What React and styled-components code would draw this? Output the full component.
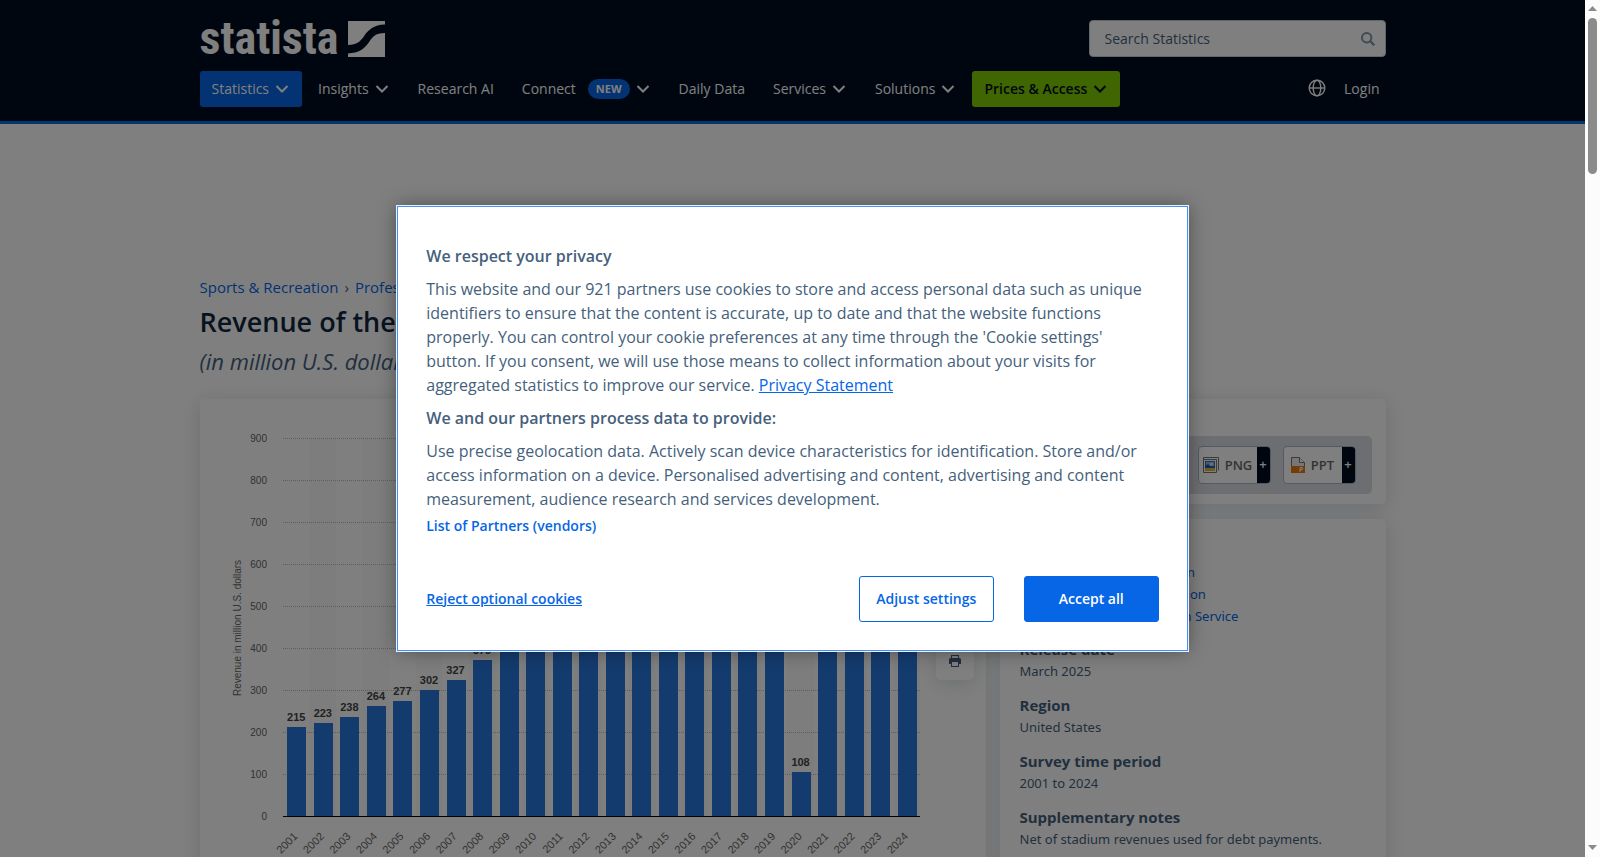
import React from 'react'
import styled, { createGlobalStyle } from 'styled-components'

const GlobalStyle = createGlobalStyle`
* { box-sizing: border-box; }
body {
  margin: 0;
  background: #fff;
  color: #455f7c;
  font-family: 'Open Sans', 'Noto Sans', sans-serif;
  font-size: 14px;
}
button, input { font-family: inherit; font-size: inherit; }
h1, h2, h3, p, dl, dt, dd, ul { margin: 0; padding: 0; }
a { color: #0666e5; text-decoration: none; }
svg { flex: none; }
`

const Window = styled.div`
display: flex;
height: 100vh;
overflow: hidden;
`

const Viewport = styled.div`
position: relative;
flex: 1;
min-width: 0;
overflow: hidden;
`

const ScrollTrack = styled.div`
display: flex;
flex-direction: column;
align-items: center;
width: 15px;
padding: 6px 0 7px;
background: #fcfcfc;
`

const ScrollThumb = styled.div`
width: 9px;
height: 156px;
margin: 7px 0 auto;
border-radius: 5px;
background: #8b8b8b;
`

const Container = styled.div`
max-width: 1186px;
margin: 0 auto;
`

const Header = styled.header`
padding: 20px 0 14px;
background: #000d20;
border-bottom: 3px solid #0666e5;
`

const HeaderTop = styled(Container)`
display: flex;
justify-content: space-between;
height: 37px;
`

const Logo = styled.a`
display: flex;
align-items: center;
gap: 9px;
color: #fff;
`

const LogoText = styled.span`
font-family: 'Liberation Sans Narrow', 'Roboto Condensed', 'Liberation Sans', sans-serif;
font-size: 46px;
font-weight: 700;
line-height: 37px;
`

const SearchForm = styled.form`
display: flex;
align-items: center;
width: 297px;
padding: 0 10px 0 15px;
background: #fff;
border: 1px solid #c3ccd6;
border-radius: 4px;
`

const SearchInput = styled.input`
flex: 1;
min-width: 0;
padding: 0;
border: 0;
outline: 0;
background: none;
&::placeholder { color: #455f7c; opacity: 1; }
`

const IconButton = styled.button`
display: flex;
padding: 0;
border: 0;
background: none;
color: ${props => props.$color || '#fff'};
`

const Nav = styled(Container)`
display: flex;
align-items: center;
gap: 4px;
padding-top: 14px;
`

const NavItem = styled.a`
display: flex;
align-items: center;
gap: 5px;
height: 36px;
padding: 0 12px 2px;
border-radius: 3px;
white-space: nowrap;
color: ${props => props.$color || '#fff'};
background: ${props => props.$bg || 'none'};
font-weight: ${props => props.$bold ? 600 : 400};
`

const Badge = styled.span`
margin: 2px 0 0 7px;
padding: 0 8px;
border-radius: 10px;
background: #0666e5;
font-size: 11px;
font-weight: 700;
line-height: 20px;
`

const NavRight = styled.div`
display: flex;
align-items: center;
gap: 18px;
margin-left: auto;
padding: 0 6px 2px 0;
a { color: #fff; }
`

const Main = styled(Container)`
padding-top: 151px;
`

const Breadcrumb = styled.nav`
display: flex;
gap: 6px;
font-size: 15px;
line-height: 24px;
`

const Title = styled.h1`
margin-top: 4px;
color: #0f2741;
font-size: 27px;
font-weight: 600;
line-height: 38px;
`

const Subtitle = styled.h2`
margin-top: 2px;
font-size: 22px;
font-style: italic;
font-weight: 400;
line-height: 36px;
`

const Columns = styled.div`
display: grid;
grid-template-columns: minmax(0, 1fr) 386px;
gap: 14px;
align-items: start;
margin-top: 20px;
`

const Card = styled.section`
background: #fff;
border-radius: 5px;
box-shadow: 0 3px 20px rgba(15, 39, 65, 0.16);
`

const ChartCard = styled(Card)`
display: flex;
justify-content: space-between;
min-height: 560px;
padding: 20px 12px 20px 20px;
`

const Chart = styled.svg`
font-family: 'Liberation Sans', Arial, sans-serif;
font-size: 10px;
fill: #666;
`

const Tools = styled.div`
display: flex;
flex-direction: column;
gap: 7px;
padding-top: 43px;
`

const Tool = styled.button`
display: flex;
align-items: center;
justify-content: center;
width: 38px;
height: 38px;
border: 0;
border-radius: 5px;
background: #fff;
color: #455f7c;
box-shadow: 0 3px 20px rgba(15, 39, 65, 0.16);
`

const Side = styled.div`
display: flex;
flex-direction: column;
gap: 15px;
`

const DownloadCard = styled(Card)`
padding: 37px 14px 10px;
`

const Formats = styled.div`
display: flex;
justify-content: flex-end;
gap: 12px;
padding: 10px 16px 10px 8px;
border-radius: 5px;
background: #d9dde3;
`

const Format = styled.button`
display: flex;
width: 73px;
height: 38px;
padding: 0;
overflow: hidden;
border: 1px solid #a6b4c8;
border-radius: 4px;
background: #fff;
color: #666;
font-size: 13px;
font-weight: 600;
line-height: 34px;
`

const FormatLabel = styled.span`
display: flex;
flex: 1;
align-items: center;
justify-content: center;
gap: 6px;
`

const Plus = styled.span`
width: 13px;
background: #000d20;
color: #fff;
line-height: 34px;
text-align: center;
`

const DetailsCard = styled(Card)`
min-height: 440px;
padding: 20px;
`

const Details = styled.dl`
dt {
  color: #455f7c;
  font-size: 15px;
  font-weight: 700;
  line-height: 22px;
}
dd {
  margin-bottom: 12px;
  font-family: 'Noto Sans', 'Open Sans', sans-serif;
  font-size: 13px;
  line-height: 22px;
}
dd:first-of-type { margin-bottom: 11px; }
dd a { display: block; }
`

const Overlay = styled.div`
position: absolute;
inset: 0;
display: grid;
place-items: center;
background: rgba(0, 0, 0, 0.5);
`

const Dialog = styled.div`
width: calc(50% - 2px);
padding: 37px 28px 28px;
border: 1px solid #4690f5;
outline: 1px solid #e8f1fd;
background: #fff;
box-shadow: 0 0 18px rgba(0, 0, 0, 0.4);
font-size: 16px;
line-height: 24px;
`

const DialogTitle = styled.h2`
margin-bottom: 9px;
font-size: 16px;
font-weight: 600;
line-height: 24px;
`

const DialogText = styled.p`
margin-bottom: ${props => props.$gap || 0}px;
a { text-decoration: underline; }
`

const PartnersLink = styled.button`
display: block;
margin-top: 5px;
padding: 0;
border: 0;
background: none;
color: #0666e5;
font-size: 14px;
font-weight: 600;
line-height: 20px;
`

const Actions = styled.div`
display: flex;
align-items: center;
gap: 30px;
margin-top: 40px;
`

const RejectButton = styled(PartnersLink)`
margin: 0 auto 0 0;
text-decoration: underline;
`

const ActionButton = styled.button`
width: 135px;
height: 46px;
padding: 0 0 2px;
border: 1px solid #0666e5;
border-radius: 3px;
background: ${props => props.$primary ? '#0666e5' : '#fff'};
color: ${props => props.$primary ? '#fff' : '#0666e5'};
font-size: 14px;
font-weight: 600;
`

const navItems = [
  { label: 'Statistics', arrow: true, bg: '#0666e5' },
  { label: 'Insights', arrow: true },
  { label: 'Research AI' },
  { label: 'Connect', arrow: true, badge: 'NEW' },
  { label: 'Daily Data' },
  { label: 'Services', arrow: true },
  { label: 'Solutions', arrow: true },
  { label: 'Prices & Access', arrow: true, bg: '#7ecc00', color: '#000d20', bold: true },
]

const revenue = [
  215, 223, 238, 264, 277, 302, 327, 375, 441, 427, 439, 471,
  461, 508, 516, 526, 619, 668, 683, 108, 482, 657, 679, 728,
]

const Chevron = () => (
  <svg width="16" height="16" viewBox="0 0 16 16" fill="none" stroke="currentColor" strokeWidth="2" aria-hidden="true">
    <path d="M2.500 6 8 11.500 13.500 6" />
  </svg>
)

const LogoMark = () => (
  <svg width="37" height="36" viewBox="0 0 37 36" fill="#fff" aria-hidden="true">
    <path d="M0 0h37v3.600C25.500 4 20.500 9 16.500 14.500 12.200 20.500 9 24 0 24z" />
    <path d="M37 12v24H0v-3.600C11 32 16.500 27.500 20 22.500 24.500 16 27 12 37 12z" />
  </svg>
)

const SearchIcon = () => (
  <svg width="14" height="14" viewBox="0 0 14 14" fill="none" stroke="currentColor" aria-hidden="true">
    <circle cx="5.700" cy="5.700" r="4.700" strokeWidth="2" />
    <path d="M9 9l4.200 4.200" strokeWidth="2.400" />
  </svg>
)

const Globe = () => (
  <svg width="18" height="18" viewBox="0 0 18 18" fill="none" stroke="currentColor" strokeWidth="1.400" aria-hidden="true">
    <circle cx="9" cy="9" r="7.800" />
    <ellipse cx="9" cy="9" rx="3.800" ry="7.800" />
    <path d="M1.200 9h15.600" />
  </svg>
)

const Printer = () => (
  <svg width="12" height="12" viewBox="0 0 12 12" fill="currentColor" aria-hidden="true">
    <path d="M2 0h8v3H2zM3 1v2h6V1z" fillRule="evenodd" />
    <path d="M1.500 3h9A1.500 1.500 0 0 1 12 4.500V9h-2v3H2V9H0V4.500A1.500 1.500 0 0 1 1.500 3zM3 7v4h6V7z" fillRule="evenodd" />
  </svg>
)

const PictureIcon = () => (
  <svg width="16" height="16" viewBox="0 0 16 16" aria-hidden="true">
    <path d="M.5 12.500V.5h15v13" fill="#fff" stroke="#777" />
    <path d="M.5 2.500h13v13H.5z" fill="#fff" stroke="#777" />
    <path d="M2 4h10v10H2z" fill="#2a6fd8" />
    <path d="M3 5h8v4H3z" fill="#85baf5" />
    <circle cx="8.500" cy="7" r="1.500" fill="#ffe98a" />
    <path d="M2 9l3-2 3 3 4-1v5H2z" fill="#225ca8" />
    <path d="M2 11h10v3H2z" fill="#e0b438" />
  </svg>
)

const SlidesIcon = () => (
  <svg width="14" height="16" viewBox="0 0 14 16" aria-hidden="true">
    <path d="M.5.5h8l5 5v10H.5z" fill="#eee" stroke="#777" />
    <path d="M8.500.5v5h5" fill="#fff" stroke="#777" />
    <path d="M0 9h14v7H0z" fill="#e8780c" />
    <path d="M9 15v-4.500h2.300v2.300H9" fill="none" stroke="#fff" />
  </svg>
)

const BASE = 397
const LEFT = 63
const STEP = 637 / 24

function RevenueChart() {
  return (
    <Chart width="710" height="500" viewBox="0 0 710 500" role="img" aria-label="Revenue by year">
      {revenue.map((value, i) => i % 2 === 1 && (
        <rect key={i} x={LEFT + i * STEP} y="19" width={STEP} height={BASE - 19} fill="#fafafa" />
      ))}
      {[0, 100, 200, 300, 400, 500, 600, 700, 800, 900].map(tick => {
        const y = BASE - tick * 0.42
        return (
          <g key={tick}>
            {tick > 0 && <path d={`M${LEFT} ${Math.round(y) + 0.5}H700`} stroke="#bbb" strokeDasharray="1 1" />}
            <text x="47" y={y + 4} textAnchor="end">{tick}</text>
          </g>
        )
      })}
      <text transform="translate(21 209) rotate(-90)" textAnchor="middle">Revenue in million U.S. dollars</text>
      {revenue.map((value, i) => {
        const center = LEFT + (i + 0.5) * STEP
        const top = Math.round(BASE + 1 - value * 0.42)
        return (
          <g key={i}>
            <rect x={Math.round(center - 9)} y={top} width="19" height={BASE - top} fill="#2876dd" />
            <text x={center} y={top - 6} textAnchor="middle" fontSize="11" fontWeight="700" fill="#444">{value}</text>
            <text transform={`translate(${center + 2} 418) rotate(-45)`} textAnchor="end" fontSize="11">{2001 + i}</text>
          </g>
        )
      })}
      <path d={`M${LEFT} ${BASE + 0.5}H700`} stroke="#000" />
    </Chart>
  )
}

function PageHeader() {
  return (
    <Header>
      <HeaderTop>
        <Logo href="#" aria-label="statista">
          <LogoText>statista</LogoText>
          <LogoMark />
        </Logo>
        <SearchForm>
          <SearchInput type="text" placeholder="Search Statistics" aria-label="Search Statistics" />
          <IconButton type="button" $color="#7f96a3" aria-label="Search"><SearchIcon /></IconButton>
        </SearchForm>
      </HeaderTop>
      <Nav as="nav">
        {navItems.map(item => (
          <NavItem key={item.label} href="#" $bg={item.bg} $color={item.color} $bold={item.bold}>
            {item.label}
            {item.badge && <Badge>{item.badge}</Badge>}
            {item.arrow && <Chevron />}
          </NavItem>
        ))}
        <NavRight>
          <IconButton type="button" aria-label="Language"><Globe /></IconButton>
          <a href="#">Login</a>
        </NavRight>
      </Nav>
    </Header>
  )
}

function SideColumn() {
  return (
    <Side>
      <DownloadCard>
        <Formats>
          <Format type="button"><FormatLabel><PictureIcon />PNG</FormatLabel><Plus>+</Plus></Format>
          <Format type="button"><FormatLabel><SlidesIcon />PPT</FormatLabel><Plus>+</Plus></Format>
        </Formats>
      </DownloadCard>
      <DetailsCard>
        <Details>
          <dt>Source</dt>
          <dd>
            <a href="#">→ Show sources information</a>
            <a href="#">→ Show publisher information</a>
            <a href="#">→ Use Ask Statista Research Service</a>
          </dd>
          <dt>Release date</dt>
          <dd>March 2025</dd>
          <dt>Region</dt>
          <dd>United States</dd>
          <dt>Survey time period</dt>
          <dd>2001 to 2024</dd>
          <dt>Supplementary notes</dt>
          <dd>Net of stadium revenues used for debt payments.</dd>
        </Details>
      </DetailsCard>
    </Side>
  )
}

function CookieDialog() {
  return (
    <Overlay>
      <Dialog role="dialog" aria-labelledby="privacy-title">
        <DialogTitle id="privacy-title">We respect your privacy</DialogTitle>
        <DialogText $gap={9}>
          This website and our 921 partners use cookies to store and access personal data such as unique
          identifiers to ensure that the content is accurate, up to date and that the website functions
          properly. You can control your cookie preferences at any time through the 'Cookie settings'
          button. If you consent, we will use those means to collect information about your visits for
          aggregated statistics to improve our service. <a href="#">Privacy Statement</a>
        </DialogText>
        <DialogTitle as="h3">We and our partners process data to provide:</DialogTitle>
        <DialogText>
          Use precise geolocation data. Actively scan device characteristics for identification. Store and/or
          access information on a device. Personalised advertising and content, advertising and content
          measurement, audience research and services development.
        </DialogText>
        <PartnersLink type="button">List of Partners (vendors)</PartnersLink>
        <Actions>
          <RejectButton type="button">Reject optional cookies</RejectButton>
          <ActionButton type="button">Adjust settings</ActionButton>
          <ActionButton type="button" $primary>Accept all</ActionButton>
        </Actions>
      </Dialog>
    </Overlay>
  )
}

export default function App() {
  return (
    <React.Fragment>
      <GlobalStyle />
      <Window>
        <Viewport>
          <PageHeader />
          <Main as="main">
            <Breadcrumb>
              <a href="#">Sports & Recreation</a>
              <span>›</span>
              <a href="#">Professional Sports</a>
            </Breadcrumb>
            <Title>Revenue of the New York Yankees</Title>
            <Subtitle>(in million U.S. dollars)</Subtitle>
            <Columns>
              <ChartCard>
                <RevenueChart />
                <Tools>
                  {[1, 2, 3, 4].map(n => <Tool key={n} type="button" aria-label="Tool" />)}
                  <Tool type="button" aria-label="Print"><Printer /></Tool>
                </Tools>
              </ChartCard>
              <SideColumn />
            </Columns>
          </Main>
          <CookieDialog />
        </Viewport>
        <ScrollTrack aria-hidden="true">
          <svg width="9" height="5" viewBox="0 0 9 5" fill="#8b8b8b"><path d="M0 5 4.500 0 9 5z" /></svg>
          <ScrollThumb />
          <svg width="9" height="5" viewBox="0 0 9 5" fill="#8b8b8b"><path d="M0 0h9L4.500 5z" /></svg>
        </ScrollTrack>
      </Window>
    </React.Fragment>
  )
}
